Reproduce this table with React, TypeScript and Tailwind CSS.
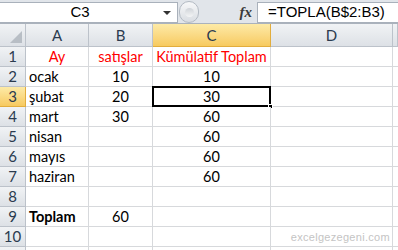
import React from "react";

type Cell = { text?: string; align?: "left" | "center"; red?: boolean; bold?: boolean };

const rows: Cell[][] = [
  [{ text: "Ay", align: "center", red: true }, { text: "satışlar", align: "center", red: true }, { text: "Kümülatif Toplam", align: "center", red: true }],
  [{ text: "ocak" }, { text: "10", align: "center" }, { text: "10", align: "center" }],
  [{ text: "şubat" }, { text: "20", align: "center" }, { text: "30", align: "center" }],
  [{ text: "mart" }, { text: "30", align: "center" }, { text: "60", align: "center" }],
  [{ text: "nisan" }, {}, { text: "60", align: "center" }],
  [{ text: "mayıs" }, {}, { text: "60", align: "center" }],
  [{ text: "haziran" }, {}, { text: "60", align: "center" }],
  [{}, {}, {}],
  [{ text: "Toplam", bold: true }, { text: "60", align: "center" }, {}],
  [{}, {}, {}],
  [{}, {}, {}],
];

const headerCell =
  "flex items-center justify-center border-r border-b border-[#bcc2ca] bg-gradient-to-b from-[#f1f3f5] to-[#dde1e6] text-[15px] text-[#2b3b4f]";
const activeHeader =
  "flex items-center justify-center border-r border-b border-[#e2ad3d] bg-gradient-to-b from-[#fdeaa6] to-[#f7ca5f] text-[15px] text-[#2b3b4f]";

function FormulaBar() {
  return (
    <div className="flex h-[24px] items-start border-b border-[#aab2bc] bg-[#e1e5ea] pt-[2px]">
      <div className="relative flex h-[21px] w-[178px] items-center border border-l-0 border-[#a9b1bb] bg-white">
        <span className="w-[160px] text-center font-['Liberation_Sans',Arial,sans-serif] text-[15px] text-black">C3</span>
        <span className="ml-[3px] h-0 w-0 border-x-[4px] border-t-[4px] border-x-transparent border-t-[#333]" />
      </div>
      <div className="ml-[1px] mt-[-1px] flex h-[22px] w-[20px] items-center justify-center rounded-full border border-[#b3bac3] bg-gradient-to-b from-[#f7f8f9] to-[#d9dde2]">
        <div className="h-[9px] w-[9px] rounded-full bg-gradient-to-b from-[#cfd3d8] to-[#f4f5f6]" />
      </div>
      <div className="flex w-[58px] justify-end pr-[5px]">
        <span className="font-['Liberation_Serif',serif] text-[15px] font-bold italic leading-[20px] text-[#3a3a3a]">fx</span>
      </div>
      <div className="flex h-[21px] flex-1 items-center border border-r-0 border-[#a9b1bb] bg-white pl-[10px]">
        <span className="font-['Liberation_Sans',Arial,sans-serif] text-[15px] text-black">=TOPLA(B$2:B3)</span>
      </div>
    </div>
  );
}

function Sheet() {
  return (
    <div className="grid grid-cols-[26px_63px_64px_118px_122px_1fr] grid-rows-[23px] auto-rows-[20px] font-['Lato','Noto_Sans',sans-serif]">
      <div className="relative border-r border-b border-[#bcc2ca] bg-gradient-to-b from-[#f1f3f5] to-[#dde1e6]">
        <div className="absolute bottom-[3px] right-[3px] h-0 w-0 border-b-[12px] border-l-[12px] border-b-[#b8bec5] border-l-transparent" />
      </div>
      <div className={headerCell}>A</div>
      <div className={headerCell}>B</div>
      <div className={activeHeader}>C</div>
      <div className={headerCell}>D</div>
      <div className={headerCell} />

      {rows.map((row, r) => (
        <React.Fragment key={r}>
          <div className={r === 2 ? activeHeader : headerCell}>{r < 10 ? r + 1 : ""}</div>
          {row.map((cell, c) => {
            const active = r === 2 && c === 2;
            return (
              <div
                key={c}
                className={`relative flex items-center overflow-visible whitespace-nowrap border-r border-b border-[#d7d9dc] bg-white px-[3px] text-[14.5px] ${
                  cell.align === "center" ? "justify-center" : "justify-start"
                } ${cell.red ? "text-[#ff0000]" : "text-black"} ${cell.bold ? "font-bold" : ""}`}
              >
                {cell.text}
                {active ? (
                  <>
                    <div className="pointer-events-none absolute -left-[1px] -top-[1px] bottom-[-1px] right-[-1px] border-2 border-black" />
                    <div className="absolute bottom-[-3px] right-[-3px] h-[5px] w-[5px] border border-white bg-black" />
                  </>
                ) : null}
              </div>
            );
          })}
          <div className="border-r border-b border-[#d7d9dc] bg-white" />
          <div className="border-b border-[#d7d9dc] bg-white" />
        </React.Fragment>
      ))}
    </div>
  );
}

export default function App() {
  return (
    <div className="relative h-[250px] w-[398px] overflow-hidden bg-white">
      <FormulaBar />
      <Sheet />
      <span className="absolute bottom-[5px] right-[8px] font-['Liberation_Sans',Arial,sans-serif] text-[11px] tracking-[0.3px] text-[#c4c4c4]">
        excelgezegeni.com
      </span>
    </div>
  );
}
